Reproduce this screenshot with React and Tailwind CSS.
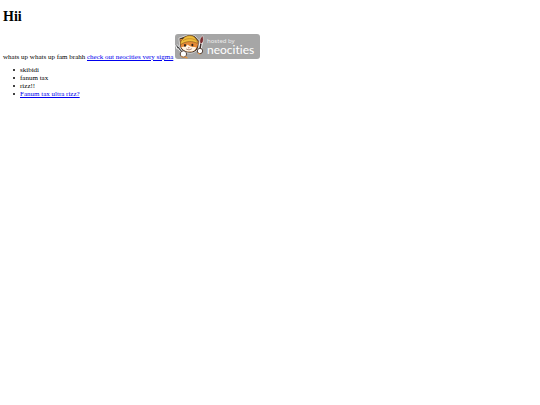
const items = ['skibidi', 'fanum tax', 'rizz!!']

const bullet =
  "flex items-center gap-[5px] before:content-[''] before:size-[2px] before:rounded-full before:bg-black"

function NeocitiesBadge() {
  return (
    <svg
      className="w-[85px] h-[25px] inline-block align-baseline"
      viewBox="0 0 85 25"
      role="img"
      aria-label="hosted by neocities"
    >
      <rect width="85" height="25" rx="3" fill="#a6a6a6" />

      {/* wrench */}
      <path d="M1.4 11 L2.6 14 L5 12.4 M3.4 13.6 L8 19" fill="none" stroke="#fff" strokeWidth="2.6" strokeLinejoin="round" />
      <path d="M1.6 11.2 L2.8 13.8 L4.8 12.6 M3.6 13.8 L7.6 18.6" fill="none" stroke="#444" strokeWidth="1.1" />

      {/* brush */}
      <path d="M24.6 17 L26.2 8" stroke="#fff" strokeWidth="3.4" strokeLinecap="round" />
      <path d="M24.8 16 L26 9" stroke="#3a2a28" strokeWidth="1.5" />
      <path d="M25 9.2 C24.2 6 25.4 3.4 27.6 1.8 C28.8 4.4 28.8 7.2 27 9.6 Z" fill="#7a2c2e" stroke="#fff" strokeWidth="0.5" />

      {/* cat head */}
      <path d="M4 4.2 L9 2.4 C13 0.2 19 0.2 21 3 L24.4 7 L23.6 13 C22.4 17.2 18.6 19.4 14 19 C9 18.6 5.2 15.8 4.8 12 Z" fill="#3b2c22" stroke="#fff" strokeWidth="0.7" />
      <path d="M5.2 5 L9.4 5 L20 4.4 L23.6 7.4 L22.4 12.4 C21.2 16 18 18 14 17.8 C9.6 17.4 6 15 5.8 12 Z" fill="#e58a38" />
      <path d="M6.4 13 C8.4 12.4 10.8 13 12.8 10.4 C15 13.4 18.8 12.6 21.4 13.4 C20.6 16.4 17.8 17.8 14 17.6 C10.4 17.4 7.2 15.6 6.4 13 Z" fill="#fff4e4" />
      <path d="M8.4 4.4 C11 0.8 17.6 0.8 20.2 3.8 C21.8 5.4 22.4 7.4 22.4 9.4 C17.6 6.8 11 6.8 5.6 10.6 C4.8 9 6.2 6 8.4 4.4 Z" fill="#f0bd3c" stroke="#80551e" strokeWidth="0.6" />
      <path d="M8.2 6.6 C12 4 17 4.2 20.8 6.2" fill="none" stroke="#b47c22" strokeWidth="0.7" />
      <ellipse cx="10" cy="11.4" rx="1" ry="1.3" fill="#2b211d" />
      <ellipse cx="17.4" cy="11" rx="1" ry="1.3" fill="#2b211d" />
      <path d="M12.8 13.4 h2 l-1 1.1 Z" fill="#a8452f" />
      <path d="M11.2 15 Q14 17 16.8 14.8" fill="none" stroke="#713a2c" strokeWidth="0.6" />

      {/* paws */}
      <circle cx="8.4" cy="20" r="3.2" fill="#fff" stroke="#48362b" strokeWidth="0.9" />
      <path d="M9.8 22.8 L12.4 24" stroke="#e8943e" strokeWidth="1.4" />
      <path d="M5.8 22 Q7.4 23.8 9.6 23.2" fill="none" stroke="#e8943e" strokeWidth="0.8" />
      <circle cx="25" cy="17" r="2.7" fill="#fff" stroke="#48362b" strokeWidth="0.9" />
      <path d="M22.8 19.2 L25.4 20.2" stroke="#e8943e" strokeWidth="1" />

      <text x="32" y="9" fontSize="6" fill="#eaeaea" fontFamily="'Noto Sans', sans-serif">
        hosted by
      </text>
      <text className="[font-variant-ligatures:none]" x="32" y="20" fontSize="12" fill="#fff" fontFamily="Lato, sans-serif">
        neocities
      </text>
    </svg>
  )
}

export default function App() {
  return (
    <main className="px-[3px] pt-[9px] bg-white text-black text-[7px] leading-[8px] font-['Liberation_Serif',serif]">
      <h1 className="text-[14px] leading-4 font-bold mb-[9px]">Hii</h1>
      <p className="mb-[5px]">
        whats up whats up fam brahh{' '}
        <a href="https://neocities.org" className="text-[#0000ee] underline">
          check out neocities very sigma
        </a>{' '}
        <a href="https://neocities.org">
          <NeocitiesBadge />
        </a>
      </p>
      <ul className="pl-2.5">
        {items.map((item) => (
          <li key={item} className={bullet}>
            {item}
          </li>
        ))}
        <li className={bullet}>
          <a href="#rizz" className="text-[#0000ee] underline">
            Fanum tax ultra rizz?
          </a>
        </li>
      </ul>
    </main>
  )
}
